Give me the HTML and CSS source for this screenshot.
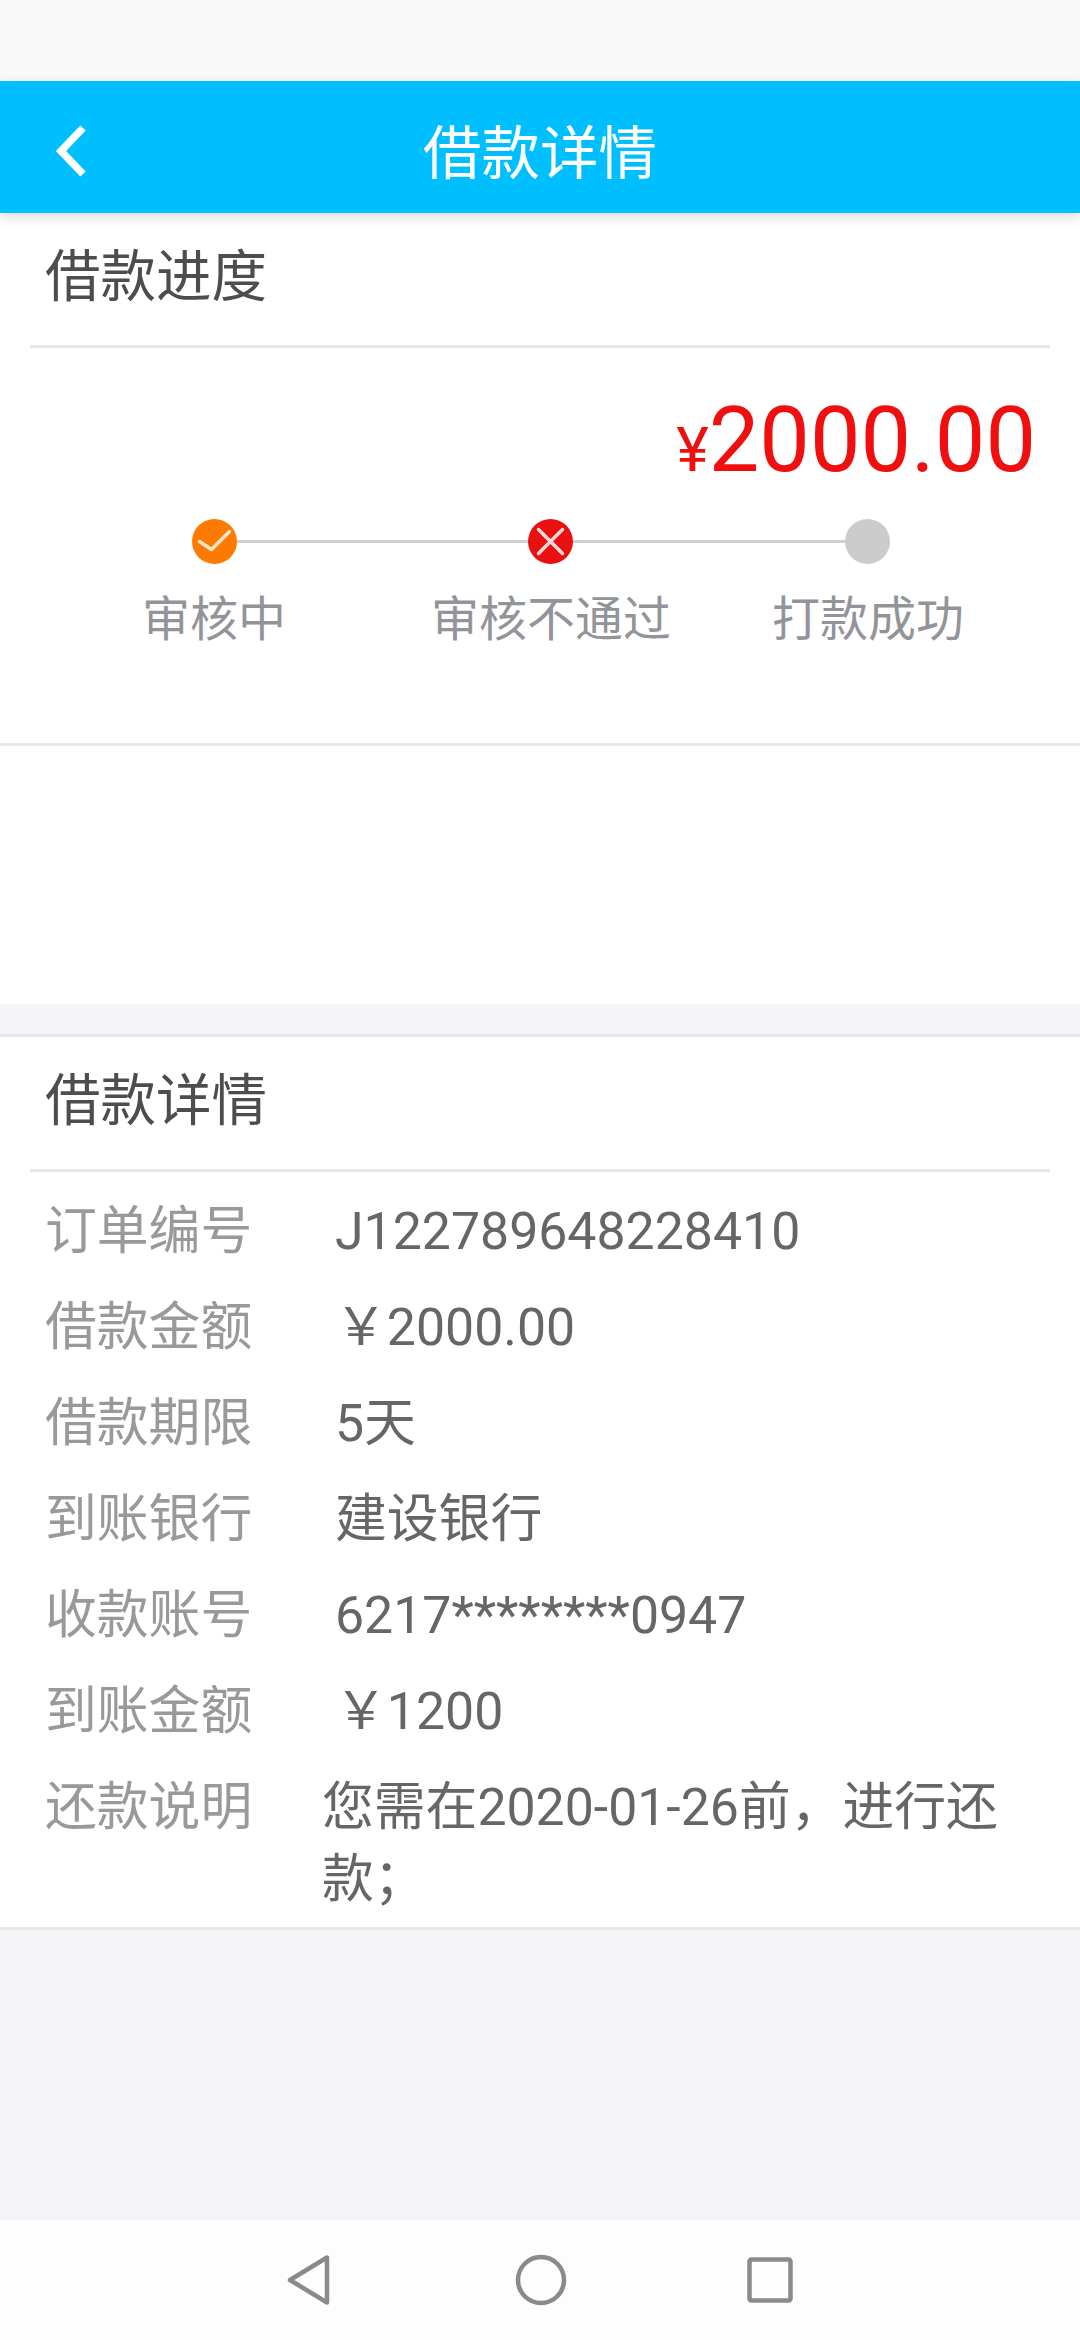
FILE: index.html
```html
<!DOCTYPE html>
<html>
<head>
  <title>借款详情</title>
  <link rel="stylesheet" href="styles.css">
</head>
<body>
  <div class="status-bar"></div>
  <header class="app-header">
    <svg class="back-icon" width="32" height="52" viewBox="0 0 32 52">
      <path d="M28 3 L6 26 L28 49" fill="none" stroke="#fff" stroke-width="7.5"/>
    </svg>
    <h1>借款详情</h1>
  </header>

  <section class="progress">
    <h2 class="section-title">借款进度</h2>
    <div class="amount"><span class="yen">¥</span>2000.00</div>
    <div class="track">
      <span class="dot dot-orange">
        <svg width="45" height="45" viewBox="0 0 45 45">
          <path d="M7.500 22.500 L19.500 30.500 L37.500 12.500" fill="none" stroke="#ffe6c8" stroke-width="3.500" stroke-linecap="round" stroke-linejoin="round"/>
        </svg>
      </span>
      <span class="line line-first"></span>
      <span class="dot dot-red">
        <svg width="45" height="45" viewBox="0 0 45 45">
          <path d="M10.500 10.500 L34.500 34.500 M34.500 10.500 L10.500 34.500" fill="none" stroke="#ffd8d8" stroke-width="3.500" stroke-linecap="round"/>
        </svg>
      </span>
      <span class="line line-second"></span>
      <span class="dot dot-gray"></span>
    </div>
    <div class="steps">
      <span class="step step-first">审核中</span>
      <span class="step step-second">审核不通过</span>
      <span class="step step-third">打款成功</span>
    </div>
  </section>
  <div class="blank"></div>

  <section class="details">
    <h2 class="section-title">借款详情</h2>
    <div class="rows">
      <div class="row"><span class="label">订单编号</span><span class="value">J122789648228410</span></div>
      <div class="row"><span class="label">借款金额</span><span class="value">￥2000.00</span></div>
      <div class="row"><span class="label">借款期限</span><span class="value">5天</span></div>
      <div class="row"><span class="label">到账银行</span><span class="value">建设银行</span></div>
      <div class="row"><span class="label">收款账号</span><span class="value">6217********0947</span></div>
      <div class="row"><span class="label">到账金额</span><span class="value">￥1200</span></div>
      <div class="row"><span class="label">还款说明</span><span class="value value-note">您需在2020-01-26前，进行还款；</span></div>
    </div>
  </section>

  <div class="filler"></div>

  <nav class="nav-bar">
    <svg width="46" height="54" viewBox="0 0 46 54">
      <path d="M41 4.500 L41 49.500 L4 27 Z" fill="none" stroke="#8a8a8a" stroke-width="4.500" stroke-linejoin="round"/>
    </svg>
    <svg class="nav-home" width="52" height="52" viewBox="0 0 52 52">
      <circle cx="26" cy="26" r="23" fill="none" stroke="#8a8a8a" stroke-width="4.500"/>
    </svg>
    <svg width="46" height="46" viewBox="0 0 46 46">
      <rect x="2.500" y="2.500" width="41" height="41" rx="2" fill="none" stroke="#8a8a8a" stroke-width="4.500"/>
    </svg>
  </nav>
</body>
</html>
```

FILE: styles.css
```css
body {
  margin: 0;
  width: 1080px;
  height: 2340px;
  display: flex;
  flex-direction: column;
  background-color: #f4f4f9;
  font-family: Roboto, "Noto Sans CJK SC", sans-serif;
  overflow: hidden;
}

.status-bar {
  height: 81px;
  background-color: #f9f9f9;
}

.app-header {
  height: 132px;
  padding-top: 3px;
  box-sizing: border-box;
  display: flex;
  align-items: center;
  justify-content: center;
  background-color: #00bfff;
  box-shadow: 0 4px 12px rgba(0, 0, 0, 0.15);
  color: #fff;
  position: relative;
  z-index: 1;
}

.app-header h1 {
  margin: 0;
  font-size: 58.500px;
  font-weight: 400;
}

.back-icon {
  position: absolute;
  left: 55px;
  top: 44px;
}

.section-title {
  margin: 0 30px;
  height: 135px;
  padding: 0 0 14px 15px;
  box-sizing: border-box;
  display: flex;
  align-items: center;
  border-bottom: 3px solid #e8e8e8;
  font-size: 55.500px;
  font-weight: 400;
  color: #4d4d4d;
}

.progress {
  height: 533px;
  box-sizing: border-box;
  background-color: #fff;
  border-bottom: 3px solid #e8e8e8;
}

.amount {
  margin-top: 41px;
  padding-right: 44px;
  text-align: right;
  font-size: 90px;
  line-height: 104px;
  color: #f00f0f;
}

.yen {
  font-size: 62px;
}

.track {
  margin-top: 17px;
  padding-left: 192px;
  display: flex;
  align-items: center;
}

.dot {
  width: 45px;
  height: 45px;
  border-radius: 50%;
  flex-shrink: 0;
}

.dot svg {
  display: block;
}

.dot-orange {
  background-color: #ff7a00;
}

.dot-red {
  background-color: #e91010;
}

.dot-gray {
  background-color: #ccc;
}

.line {
  height: 3px;
  background-color: #d0d0d0;
}

.line-first {
  width: 291px;
}

.line-second {
  width: 272px;
}

.steps {
  margin-top: 21px;
  display: flex;
  padding-left: 30px;
  font-size: 48px;
  line-height: 70px;
  color: #929499;
  text-align: center;
}

.step-first {
  width: 368px;
}

.step-second {
  width: 306px;
}

.step-third {
  width: 328px;
}

.blank {
  height: 258px;
  background-color: #fff;
}

.details {
  margin-top: 30px;
  height: 896px;
  box-sizing: border-box;
  background-color: #fff;
  border-top: 3px solid #e8e8e8;
  border-bottom: 3px solid #e8e8e8;
}

.rows {
  padding: 24px 30px 0 45px;
}

.row {
  display: flex;
  font-size: 51.800px;
  line-height: 72px;
  margin-bottom: 24px;
}

.label {
  width: 290px;
  flex-shrink: 0;
  color: #999;
}

.value {
  color: #666;
}

.value-note {
  margin-left: -13px;
}

.filler {
  flex: 1;
}

.nav-bar {
  height: 120px;
  display: flex;
  align-items: center;
  background-color: #fdfdfd;
  padding-left: 286px;
  gap: 180px;
}

.nav-home {
  margin-left: 3px;
}
```
